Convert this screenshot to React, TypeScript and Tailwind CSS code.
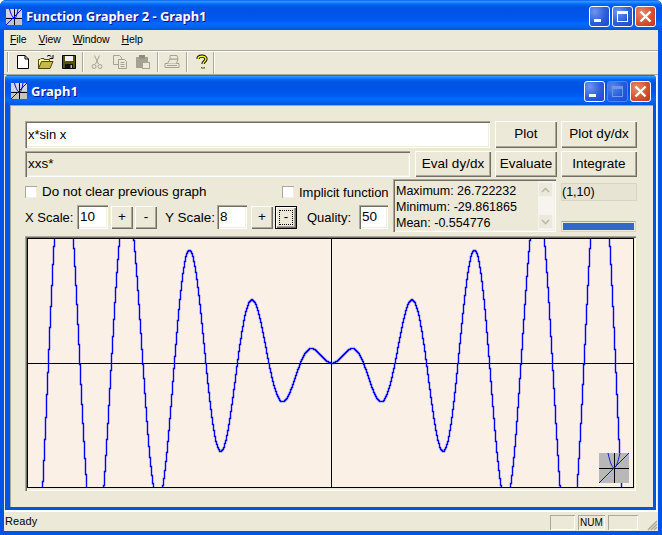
import React from "react";

const SANS = "font-['Liberation_Sans',Arial,sans-serif]";
const TITLE = "font-['Noto_Sans',Tahoma,sans-serif] font-bold";
const SUNKEN = "shadow-[inset_1px_1px_0_#aca899,inset_2px_2px_0_#716f64,inset_-1px_-1px_0_#ffffff,inset_-2px_-2px_0_#f1efe2]";
const RAISED = "bg-[#ece9d8] shadow-[inset_1px_1px_0_#ffffff,inset_-1px_-1px_0_#716f64,inset_-2px_-2px_0_#aca899]";
const TITLEBG = "bg-[linear-gradient(to_bottom,#0058ee_0%,#3593ff_4%,#288eff_7%,#127dff_10%,#036ffc_13%,#0262ee_17%,#0057e5_22%,#0054e3_28%,#0055eb_56%,#005bf5_68%,#026afe_80%,#0062ef_90%,#0056e0_100%)]";

function Win({ kind, size = 21, off = false }: { kind: "min" | "max" | "close"; size?: number; off?: boolean }) {
  const bg =
    kind === "close"
      ? "bg-[radial-gradient(circle_at_30%_30%,#ec8a6c,#d8512f_55%,#b8391a)]"
      : "bg-[radial-gradient(circle_at_25%_25%,#6f95ee,#2c5ddc_55%,#1d46c8)]";
  return (
    <div
      style={{ width: size, height: size }}
      className={`${bg} ${off ? "border-[#6a8fe8]" : "border-white"} border rounded-[3px] flex items-center justify-center shrink-0 ${off ? "opacity-80" : ""}`}
    >
      <svg width="19" height="19" viewBox="0 0 19 19">
        {kind === "min" && <rect x="4" y="12" width="7" height="3" fill="#fff" />}
        {kind === "max" && (
          <g fill="none" stroke={off ? "#8aa8ee" : "#fff"}>
            <rect x="4.5" y="4.5" width="10" height="10" />
            <rect x="4" y="4" width="11" height="3" fill={off ? "#8aa8ee" : "#fff"} stroke="none" />
          </g>
        )}
        {kind === "close" && <path d="M4.5 4.5 14.5 14.5M14.5 4.5 4.5 14.5" stroke="#fff" strokeWidth="2.4" />}
      </svg>
    </div>
  );
}

function AppIcon() {
  return (
    <svg width="16" height="16" viewBox="0 0 16 16" className="shrink-0">
      <rect width="16" height="16" fill="#c4c4c4" />
      <rect x="0" y="0" width="16" height="8" fill="#d4d4e4" />
      <path d="M0 9.5H16M8.5 0V16" stroke="#000" />
      <path d="M0 16 16 0" stroke="#0000e0" />
      <path d="M3.5 0C5 6 7 9 8.5 9.5 10 9 11 6 12 0" stroke="#0000e0" fill="none" />
    </svg>
  );
}

function Btn({ w, h, label }: { w: string; h?: string; label: string }) {
  return (
    <div className={`${w} ${h ?? "h-full"} ${RAISED} flex items-center justify-center shrink-0 text-[13.5px] text-black`}>
      {label}
    </div>
  );
}

function Check({ label, size }: { label: string; size: string }) {
  return (
    <div className="flex items-center whitespace-nowrap">
      <div className="w-[12px] h-[12px] mr-[5px] bg-white shadow-[inset_1px_1px_0_#aca899,inset_-1px_-1px_0_#f1efe2] shrink-0" />
      <span className={`${size} text-black leading-none`}>{label}</span>
    </div>
  );
}

function Field({ w, v }: { w: string; v: string }) {
  return <div className={`${w} h-[24px] bg-white ${SUNKEN} pl-[3px] flex items-center shrink-0 text-[13.5px]`}>{v}</div>;
}

function Curve() {
  const k = 10.03;
  const ys: number[] = [];
  for (let px = -1; px <= 608; px++) {
    const x = (px - 304.5) / k;
    ys.push(124.7 - 8 * x * Math.sin(x));
  }
  let d = "";
  for (let px = 0; px <= 607; px++) {
    const y = ys[px + 1];
    const a = Math.round((ys[px] + y) / 2) + 0.5;
    const b = Math.round((y + ys[px + 2]) / 2) + 0.5;
    d += `${px === 0 ? "M" : "L"}${px + 0.5} ${a}V${b}`;
  }
  return (
    <svg width="607" height="250" viewBox="0 0 607 250" className="block">
      <path d="M0 125.5H607M304.5 0V250" stroke="#000" strokeWidth="1" shapeRendering="crispEdges" />
      <path d={d} fill="none" stroke="#0000ff" strokeWidth="1.4" strokeLinejoin="miter" />
    </svg>
  );
}

function Toolbar() {
  const gray = "#a5a294";
  const Sep = ({ w }: { w: string }) => (
    <div className={`${w} h-full flex justify-center items-center pb-[2px]`}>
      <div className="w-[1px] h-[20px] bg-[#aca899] shadow-[1px_0_0_#fff]" />
    </div>
  );
  const Slot = ({ children }: { children: React.ReactNode }) => (
    <div className="w-[23px] h-full flex items-center justify-center shrink-0 pb-[3px]">{children}</div>
  );
  return (
    <div className="h-[22px] flex items-center bg-[#ece9d8] pl-[3px]">
      <div className="w-[1px] h-[20px] mb-[2px] bg-[#aca899] shadow-[1px_0_0_#fff] mr-[3px]" />
      <Slot>
        <svg width="16" height="16" viewBox="0 0 16 16">
          <path d="M2.5 1.5H10L13.5 5V14.5H2.5Z" fill="#fff" stroke="#000" />
          <path d="M10 1.5V5H13.5" fill="none" stroke="#000" />
        </svg>
      </Slot>
      <Slot>
        <svg width="16" height="16" viewBox="0 0 16 16">
          <path d="M.5 14.5V5.5H2L3 4.5H6V5.5H11.5V7.5" fill="#ffff99" stroke="#4a4a00" />
          <path d="M.5 14.5 3.5 7.5H15L12 14.5Z" fill="#c8b848" stroke="#4a4a00" />
          <path d="M9 2.5C10 1 12 1 13.5 3" fill="none" stroke="#000" />
          <path d="M15 1V4.5H11.5" fill="none" stroke="#000" />
        </svg>
      </Slot>
      <Slot>
        <svg width="16" height="16" viewBox="0 0 16 16">
          <path d="M1.5 1.5H14.5V14.5H1.5Z" fill="#555500" stroke="#000" />
          <rect x="4" y="2" width="8" height="5" fill="#f0f0f0" />
          <rect x="4" y="10" width="8" height="4.5" fill="#111" />
          <rect x="9.5" y="11" width="1.5" height="3" fill="#bbb" />
        </svg>
      </Slot>
      <Sep w="w-[5px]" />
      <Slot>
        <svg width="16" height="16" viewBox="0 0 16 16" fill="none" stroke={gray}>
          <path d="M5.5 1.5 9.5 10M10.5 1.5 6.5 10" />
          <circle cx="5" cy="12.5" r="2" />
          <circle cx="11" cy="12.5" r="2" />
        </svg>
      </Slot>
      <Slot>
        <svg width="16" height="16" viewBox="0 0 16 16" stroke={gray} fill="#ece9d8">
          <path d="M1.5 1.5H7.5L9.5 3.5V10.5H1.5Z" />
          <path d="M6.5 5.5H12.5L14.5 7.5V14.5H6.5Z" />
          <path d="M8.5 8.5H12.5M8.5 10.5H12.5M8.5 12.5H12.5" />
        </svg>
      </Slot>
      <Slot>
        <svg width="16" height="16" viewBox="0 0 16 16">
          <path d="M1 3H13V14H1Z" fill={gray} />
          <rect x="4" y="1" width="6" height="3.5" fill="#8d8b7e" />
          <rect x="7.5" y="8.5" width="7" height="6" fill="#ece9d8" stroke={gray} />
        </svg>
      </Slot>
      <Sep w="w-[6px]" />
      <Slot>
        <svg width="16" height="16" viewBox="0 0 16 16" stroke={gray} fill="#ece9d8">
          <path d="M1 9.5H15V13.5H1Z" />
          <path d="M3.5 9.5 6 5H14L12.5 9.5" />
          <path d="M6 1.5H13L14 5H6Z" />
          <path d="M3 11.5H13" />
        </svg>
      </Slot>
      <Sep w="w-[7px]" />
      <Slot>
        <svg width="12" height="16" viewBox="0 0 12 16">
          <path d="M2 5C2 1.5 10 1 10 5C10 7.5 7 7.5 7 10M7 13V14.5" fill="none" stroke="#000" strokeWidth="3.2" />
          <path d="M2 5C2 1.5 10 1 10 5C10 7.5 7 7.5 7 10M7 13V14.5" fill="none" stroke="#ffff00" strokeWidth="1.4" />
        </svg>
      </Slot>
      <div className="w-[1px] h-[22px] bg-[#aca899] shadow-[1px_0_0_#fff]" />
    </div>
  );
}

function Arrow({ up }: { up?: boolean }) {
  return (
    <div className="w-[15px] h-[15px] rounded-[2px] bg-[#ebe8dc] border border-[#f4f2ea] flex items-center justify-center shrink-0">
      <svg width="9" height="6" viewBox="0 0 9 6">
        <path d={up ? "M1 5 4.5 1.5 8 5" : "M1 1 4.5 4.5 8 1"} fill="none" stroke="#bdbaa8" strokeWidth="1.6" />
      </svg>
    </div>
  );
}

export default function App() {
  return (
    <div className={`w-[662px] h-[535px] bg-[#0054e3] flex flex-col overflow-hidden rounded-t-[6px] ${SANS} text-black`}>
      <div className={`h-[30px] ${TITLEBG} flex items-center pl-[6px] pr-[6px] pt-[3px] shrink-0`}>
        <AppIcon />
        <span className={`${TITLE} ml-[4px] mt-[1px] text-white text-[13px] tracking-[-0.05px] [text-shadow:1px_1px_0_#0f1089]`}>Function Grapher 2 - Graph1</span>
        <div className="ml-auto flex gap-[2px]">
          <Win kind="min" />
          <Win kind="max" />
          <Win kind="close" />
        </div>
      </div>
      <div className="flex-1 flex flex-col mx-[4px] mb-[4px] bg-[#ece9d8] min-h-0">
        <div className="h-[20px] flex items-center pl-[6px] gap-[12px] text-[10.5px] tracking-[-0.1px] shrink-0">
          <span><u>F</u>ile</span>
          <span><u>V</u>iew</span>
          <span><u>W</u>indow</span>
          <span><u>H</u>elp</span>
        </div>
        <div className="h-[2px] bg-[#aca899] border-b border-white shrink-0" />
        <Toolbar />
        <div className="h-[1px] bg-[#aca899] shrink-0" />
        <div className="h-[435px] ml-[1px] mr-[1px] rounded-t-[4px] bg-[#0054e3] flex flex-col shrink-0 border-r border-white">
          <div className={`h-[30px] ${TITLEBG} rounded-t-[4px] flex items-center pl-[6px] pr-[5px] pt-[2px] shrink-0`}>
            <AppIcon />
            <span className={`${TITLE} ml-[4px] mt-[2px] text-white text-[13px] [text-shadow:1px_1px_0_#0f1089]`}>Graph1</span>
            <div className="ml-auto flex gap-[2px]">
              <Win kind="min" />
              <Win kind="max" off />
              <Win kind="close" />
            </div>
          </div>
          <div className="flex-1 ml-[5px] mr-[3px] mb-[3px] bg-[#ece9d8] pl-[15px] pt-[16px] shadow-[inset_1px_1px_0_#aca899] min-h-0">
            <div className="h-[27px] flex">
              <div className={`w-[465px] h-full bg-white ${SUNKEN} pl-[3px] flex items-center text-[13px]`}>x*sin x</div>
              <div className="w-[5px]" />
              <Btn w="w-[62px]" label="Plot" />
              <div className="w-[4px]" />
              <Btn w="w-[76px]" label="Plot dy/dx" />
            </div>
            <div className="h-[26px] flex mt-[3px]">
              <div className={`w-[385px] h-full ${SUNKEN} pl-[3px] flex items-center text-[13.5px]`}>xxs*</div>
              <div className="w-[5px]" />
              <Btn w="w-[76px]" label="Eval dy/dx" />
              <div className="w-[4px]" />
              <Btn w="w-[62px]" label="Evaluate" />
              <div className="w-[4px]" />
              <Btn w="w-[76px]" label="Integrate" />
            </div>
            <div className="flex mt-[2px] h-[53px]">
              <div className="w-[368px] shrink-0 flex flex-col">
                <div className="flex items-center h-[14px] mt-[6px]">
                  <div className="w-[257px] shrink-0">
                    <Check label="Do not clear previous graph" size="text-[13.4px]" />
                  </div>
                  <Check label="Implicit function" size="text-[13px]" />
                </div>
                <div className="flex items-center mt-[6px] h-[24px] text-[13.5px]">
                  <span className="w-[52px] shrink-0 whitespace-nowrap pt-[2px] text-[13px]">X Scale:</span>
                  <Field w="w-[31px]" v="10" />
                  <div className="w-[3px]" />
                  <Btn w="w-[22px]" h="h-[23px]" label="+" />
                  <div className="w-[2px]" />
                  <Btn w="w-[22px]" h="h-[23px]" label="-" />
                  <span className="w-[52px] ml-[8px] shrink-0 whitespace-nowrap pt-[2px]">Y Scale:</span>
                  <Field w="w-[30px]" v="8" />
                  <div className="w-[4px]" />
                  <Btn w="w-[22px]" h="h-[23px]" label="+" />
                  <div className="w-[2px]" />
                  <div className={`w-[22px] h-[23px] ${RAISED} border border-black flex items-center justify-center shrink-0`}>
                    <div className="w-[14px] h-[15px] border border-dotted border-black flex items-center justify-center">-</div>
                  </div>
                  <span className="ml-[10px] w-[52px] shrink-0 whitespace-nowrap pt-[2px] text-[13px]">Quality:</span>
                  <Field w="w-[29px]" v="50" />
                </div>
              </div>
              <div className={`w-[163px] shrink-0 flex ${SUNKEN} p-[2px]`}>
                <div className="flex-1 pl-[1px] text-[12.5px] leading-[16px] whitespace-nowrap overflow-hidden pt-[2px]">
                  <div>Maximum: 26.722232</div>
                  <div>Minimum: -29.861865</div>
                  <div>Mean: -0.554776</div>
                </div>
                <div className="w-[16px] flex flex-col justify-between py-[1px] bg-[#f5f4ee] shrink-0">
                  <Arrow up />
                  <Arrow />
                </div>
              </div>
              <div className="ml-[5px] w-[76px] shrink-0 flex flex-col">
                <div className="mt-[4px] h-[18px] bg-[#e7e4d3] border border-[#d8d4c4] text-[12.5px] flex items-center">(1,10)</div>
                <div className="mt-[20px] h-[12px] w-[75px] border border-[#d8d4c4] p-[1px] bg-[#ece9d8] border-t-[#aca899]">
                  <div className="w-full h-full bg-[#316ac5]" />
                </div>
              </div>
            </div>
            <div className={`mt-[4px] w-[611px] h-[255px] ${SUNKEN} pl-[2px] pt-[2px]`}>
              <div className="w-[607px] h-[250px] bg-[#faf0e6] outline outline-1 outline-black -outline-offset-1 relative">
                <Curve />
                <svg width="30" height="30" viewBox="0 0 30 30" className="absolute right-[5px] bottom-[5px]">
                  <rect width="30" height="30" fill="#b8b8b8" />
                  <path d="M0 15.5H30M15.5 0V30" stroke="#000" />
                  <path d="M0 30 30 0" stroke="#1414e0" />
                  <path d="M9 0C11 9 13 15 15 15 17 15 19 9 21 0" stroke="#1414e0" fill="none" />
                </svg>
              </div>
            </div>
          </div>
        </div>
        <div className="h-[2px] bg-white shrink-0" />
        <div className="flex-1 flex items-center pl-[1px] text-[11px] relative min-h-0">
          <span className="tracking-[0.1px]">Ready</span>
          <div className="ml-auto flex gap-[3px] h-[15px] mr-[20px] mt-[2px]">
            <div className="w-[25px] shadow-[inset_1px_1px_0_#aca899,inset_-1px_-1px_0_#fff]" />
            <div className="w-[27px] shadow-[inset_1px_1px_0_#aca899,inset_-1px_-1px_0_#fff] flex items-center justify-center text-[10px]">NUM</div>
            <div className="w-[30px] shadow-[inset_1px_1px_0_#aca899,inset_-1px_-1px_0_#fff]" />
          </div>
          <svg width="12" height="12" viewBox="0 0 12 12" className="absolute right-0 bottom-0">
            <path d="M11 2 2 11M11 5 5 11M11 8 8 11" stroke="#aca899" strokeWidth="1.5" />
          </svg>
        </div>
      </div>
    </div>
  );
}
